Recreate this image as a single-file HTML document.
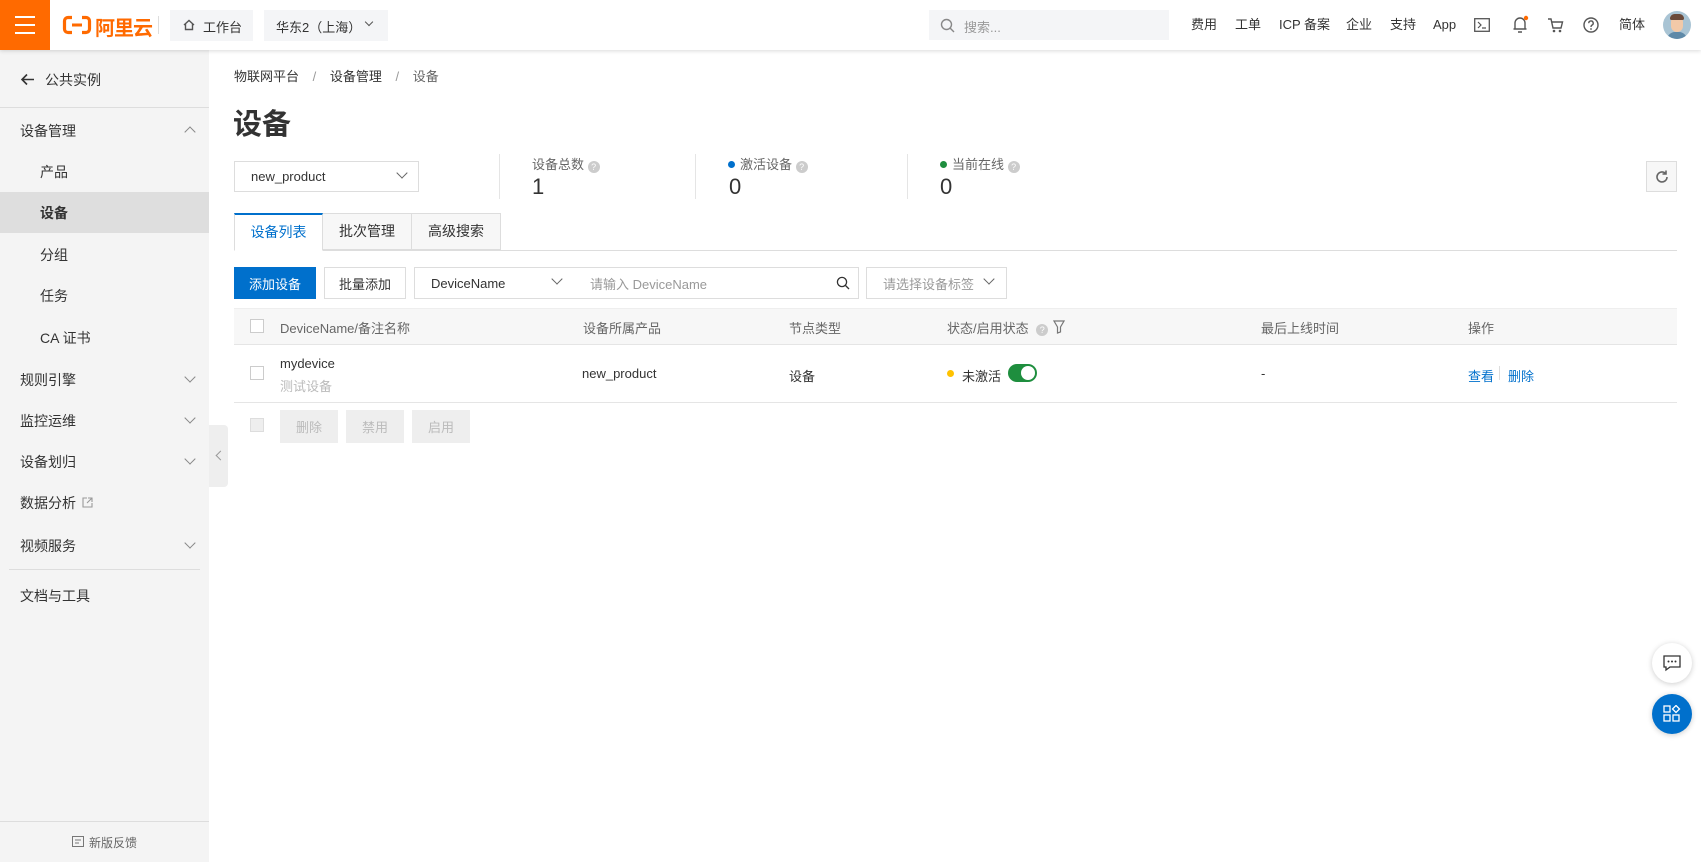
<!DOCTYPE html>
<html><head><meta charset="utf-8"><style>
*{margin:0;padding:0;box-sizing:border-box}
body{width:1701px;height:862px;overflow:hidden;background:#fff;font-family:"Liberation Sans","Noto Sans CJK SC",sans-serif;font-size:13px;color:#333;position:relative}
.a{position:absolute}
.hdr{left:0;top:0;width:1701px;height:50px;background:#fff;box-shadow:0 1px 4px rgba(0,0,0,.15);z-index:5}
.side{left:0;top:50px;width:209px;height:812px;background:#f4f4f4}
.si{position:absolute;left:20px;font-size:14px;color:#333}
.chev{position:absolute;left:186px;width:8px;height:8px;border-right:1.5px solid #888;border-bottom:1.5px solid #888}
.th{position:absolute;top:318px;font-size:13px;color:#666}
.btn{position:absolute;border:1px solid #ddd;background:#fff;font-size:13px;display:flex;align-items:center;justify-content:center}
.nav{position:absolute;top:16px;font-size:13px;line-height:18px;color:#333;white-space:nowrap}
</style></head><body>
<div class="a hdr">
 <div class="a" style="left:0;top:0;width:50px;height:50px;background:#ff6a00">
  <div class="a" style="left:15px;top:16px;width:20px;height:2px;background:#fff"></div>
  <div class="a" style="left:15px;top:24px;width:20px;height:2px;background:#fff"></div>
  <div class="a" style="left:15px;top:32px;width:20px;height:2px;background:#fff"></div>
 </div>
 <svg class="a" style="left:62px;top:15px" width="30" height="20" viewBox="0 0 30 20"><path d="M10 2.5H6a3.5 3.5 0 0 0-3.5 3.5v8A3.5 3.5 0 0 0 6 17.5h4M20 2.5h4A3.5 3.5 0 0 1 27.5 6v8a3.5 3.5 0 0 1-3.5 3.5h-4" fill="none" stroke="#ff6a00" stroke-width="3.2"/><rect x="10" y="8.5" width="10" height="3" fill="#ff6a00"/></svg>
 <div class="a" style="left:95px;top:12px;font-size:20px;font-weight:bold;color:#ff6a00;letter-spacing:-1px">阿里云</div>
 <div class="a" style="left:158px;top:16px;width:1px;height:18px;background:#ddd"></div>
 <div class="a" style="left:170px;top:10px;width:83px;height:31px;background:#f4f5f7;font-size:13px;color:#333;padding:7px 0 0 33px">工作台</div>
 <svg class="a" style="left:182px;top:18px" width="14" height="14" viewBox="0 0 14 14"><path d="M2 7L7 2.5 12 7M3.5 6v5.5h7V6" fill="none" stroke="#555" stroke-width="1.4"/></svg>
 <div class="a" style="left:264px;top:10px;width:124px;height:31px;background:#f4f5f7;font-size:13px;color:#333;padding:7px 0 0 12px">华东2（上海）</div>
 <div class="a" style="left:366px;top:19px;width:6px;height:6px;border-right:1.4px solid #555;border-bottom:1.4px solid #555;transform:rotate(45deg)"></div>
 <div class="a" style="left:929px;top:10px;width:240px;height:30px;background:#f4f5f7;color:#999;padding:7px 0 0 35px">搜索...</div>
 <svg class="a" style="left:940px;top:18px" width="15" height="15"><circle cx="6.5" cy="6.5" r="5" fill="none" stroke="#888" stroke-width="1.4"/><path d="M10 10l4 4" stroke="#888" stroke-width="1.4"/></svg>
 <div class="nav" style="left:1191px">费用</div>
 <div class="nav" style="left:1235px">工单</div>
 <div class="nav" style="left:1279px">ICP 备案</div>
 <div class="nav" style="left:1346px">企业</div>
 <div class="nav" style="left:1390px">支持</div>
 <div class="nav" style="left:1433px">App</div>
 <svg class="a" style="left:1474px;top:18px" width="16" height="14"><rect x=".7" y=".7" width="14.6" height="12.6" fill="none" stroke="#555" stroke-width="1.3"/><path d="M4 4l3 3-3 3M8 10h4" fill="none" stroke="#555" stroke-width="1.2"/></svg>
 <svg class="a" style="left:1511px;top:15px" width="18" height="19"><path d="M4 14V8a5 5 0 0 1 10 0v6zM2.5 14h13M7 17h4" fill="none" stroke="#555" stroke-width="1.4"/><circle cx="15" cy="3" r="2.2" fill="#ff6a00"/></svg>
 <svg class="a" style="left:1547px;top:17px" width="17" height="16"><path d="M1 2h3l2 9h8l1.5-6H5" fill="none" stroke="#555" stroke-width="1.4"/><circle cx="7" cy="14" r="1.3" fill="#555"/><circle cx="13" cy="14" r="1.3" fill="#555"/></svg>
 <svg class="a" style="left:1583px;top:17px" width="16" height="16"><circle cx="8" cy="8" r="7" fill="none" stroke="#555" stroke-width="1.4"/><path d="M5.8 6.2a2.2 2.2 0 1 1 3 2c-.8.4-.8.9-.8 1.8" fill="none" stroke="#555" stroke-width="1.4"/><circle cx="8" cy="12" r=".9" fill="#555"/></svg>
 <div class="nav" style="left:1619px">简体</div>
 <div class="a" style="left:1663px;top:11px;width:28px;height:28px;border-radius:50%;background:#a9c4d4;overflow:hidden">
  <div class="a" style="left:8px;top:5px;width:12px;height:16px;border-radius:6px;background:#f2c9a8"></div>
  <div class="a" style="left:7px;top:3px;width:14px;height:6px;border-radius:6px 6px 2px 2px;background:#6b4a3a"></div>
  <div class="a" style="left:4px;top:21px;width:20px;height:10px;border-radius:8px 8px 0 0;background:#5e89a8"></div>
 </div>
</div>

<div class="a side">
 <div class="si" style="top:20px;left:45px">公共实例</div>
 <svg class="a" style="left:20px;top:23px" width="15" height="13"><path d="M14 6.5H2M7 1.5l-5 5 5 5" fill="none" stroke="#333" stroke-width="1.6"/></svg>
 <div class="a" style="left:0;top:57px;width:209px;height:1px;background:#ddd"></div>
 <div class="si" style="top:71px">设备管理</div>
 <div class="chev" style="top:78px;transform:rotate(-135deg)"></div>
 <div class="si" style="top:112px;left:40px">产品</div>
 <div class="a" style="left:0;top:142px;width:209px;height:41px;background:#dedede"></div>
 <div class="si" style="top:153px;left:40px;font-weight:bold">设备</div>
 <div class="si" style="top:195px;left:40px">分组</div>
 <div class="si" style="top:236px;left:40px">任务</div>
 <div class="si" style="top:278px;left:40px">CA 证书</div>
 <div class="si" style="top:320px">规则引擎</div><div class="chev" style="top:323px;transform:rotate(45deg)"></div>
 <div class="si" style="top:361px">监控运维</div><div class="chev" style="top:364px;transform:rotate(45deg)"></div>
 <div class="si" style="top:402px">设备划归</div><div class="chev" style="top:405px;transform:rotate(45deg)"></div>
 <div class="si" style="top:443px">数据分析</div>
 <svg class="a" style="left:82px;top:447px" width="11" height="11"><path d="M5 1H1v9h9V6M6 1h4v4M10 1L5 6" fill="none" stroke="#999" stroke-width="1.1"/></svg>
 <div class="si" style="top:486px">视频服务</div><div class="chev" style="top:489px;transform:rotate(45deg)"></div>
 <div class="a" style="left:9px;top:519px;width:191px;height:1px;background:#ddd"></div>
 <div class="si" style="top:536px">文档与工具</div>
 <div class="a" style="left:0;top:771px;width:209px;height:1px;background:#ddd"></div>
 <div class="a" style="left:89px;top:784px;font-size:12px;color:#666">新版反馈</div>
 <svg class="a" style="left:72px;top:786px" width="12" height="11"><rect x=".5" y=".5" width="11" height="10" fill="none" stroke="#777"/><path d="M3 4h6M3 7h4" stroke="#777"/></svg>
</div>
<div class="a" style="left:209px;top:425px;width:19px;height:62px;background:#eee;border-radius:0 4px 4px 0"></div>
<div class="a" style="left:217px;top:452px;width:7px;height:7px;border-left:1.3px solid #999;border-bottom:1.3px solid #999;transform:rotate(45deg)"></div>

<div class="a" style="left:234px;top:66px;font-size:13px;color:#333">物联网平台 <span style="color:#999;margin:0 10px">/</span> 设备管理 <span style="color:#999;margin:0 10px">/</span> <span style="color:#666">设备</span></div>
<div class="a" style="left:233px;top:101px;font-size:29px;font-weight:bold;color:#333">设备</div>

<div class="btn" style="left:234px;top:161px;width:185px;height:31px;justify-content:flex-start;padding-left:16px">new_product</div>
<div class="a" style="left:398px;top:169px;width:8px;height:8px;border-right:1.4px solid #666;border-bottom:1.4px solid #666;transform:rotate(45deg)"></div>

<div class="a" style="left:499px;top:154px;width:1px;height:45px;background:#e5e5e5"></div>
<div class="a" style="left:695px;top:154px;width:1px;height:45px;background:#e5e5e5"></div>
<div class="a" style="left:907px;top:154px;width:1px;height:45px;background:#e5e5e5"></div>
<div class="a" style="left:532px;top:154px;color:#666">设备总数 <span style="display:inline-block;width:12px;height:12px;border-radius:50%;background:#ccc;color:#fff;font-size:9px;text-align:center;line-height:12px;vertical-align:-1px">?</span></div>
<div class="a" style="left:532px;top:174px;font-size:22px;color:#333">1</div>
<div class="a" style="left:728px;top:154px;color:#666"><span style="display:inline-block;width:7px;height:7px;border-radius:50%;background:#0070cc;margin-right:5px;vertical-align:1px"></span>激活设备 <span style="display:inline-block;width:12px;height:12px;border-radius:50%;background:#ccc;color:#fff;font-size:9px;text-align:center;line-height:12px;vertical-align:-1px">?</span></div>
<div class="a" style="left:729px;top:174px;font-size:22px;color:#333">0</div>
<div class="a" style="left:940px;top:154px;color:#666"><span style="display:inline-block;width:7px;height:7px;border-radius:50%;background:#1e8e3e;margin-right:5px;vertical-align:1px"></span>当前在线 <span style="display:inline-block;width:12px;height:12px;border-radius:50%;background:#ccc;color:#fff;font-size:9px;text-align:center;line-height:12px;vertical-align:-1px">?</span></div>
<div class="a" style="left:940px;top:174px;font-size:22px;color:#333">0</div>
<div class="btn" style="left:1646px;top:161px;width:31px;height:31px;background:#f7f7f7"><svg width="16" height="16"><path d="M13 8a5 5 0 1 1-1.6-3.7M12 1.5v3.5H8.5" fill="none" stroke="#666" stroke-width="1.6"/></svg></div>

<div class="a" style="left:234px;top:250px;width:1443px;height:1px;background:#ddd"></div>
<div class="a" style="left:234px;top:213px;width:89px;height:38px;border:1px solid #ddd;border-top:2px solid #0070cc;border-bottom:1px solid #fff;background:#fff;color:#0070cc;font-size:14px;text-align:center;line-height:34px">设备列表</div>
<div class="a" style="left:323px;top:213px;width:89px;height:37px;border:1px solid #ddd;border-left:0;background:#f7f7f7;font-size:14px;text-align:center;line-height:35px">批次管理</div>
<div class="a" style="left:412px;top:213px;width:89px;height:37px;border:1px solid #ddd;border-left:0;background:#f7f7f7;font-size:14px;text-align:center;line-height:35px">高级搜索</div>

<div class="btn" style="left:234px;top:267px;width:82px;height:32px;background:#0070cc;border-color:#0070cc;color:#fff">添加设备</div>
<div class="btn" style="left:324px;top:267px;width:82px;height:32px">批量添加</div>
<div class="btn" style="left:414px;top:267px;width:161px;height:32px;justify-content:flex-start;padding-left:16px">DeviceName</div>
<div class="a" style="left:553px;top:275px;width:8px;height:8px;border-right:1.4px solid #666;border-bottom:1.4px solid #666;transform:rotate(45deg)"></div>
<div class="btn" style="left:574px;top:267px;width:285px;height:32px;border-left:0;justify-content:flex-start;padding-left:16px;color:#999">请输入 DeviceName</div>
<svg class="a" style="left:836px;top:276px" width="14" height="14"><circle cx="6" cy="6" r="4.6" fill="none" stroke="#333" stroke-width="1.3"/><path d="M9.5 9.5l3.5 3.5" stroke="#333" stroke-width="1.3"/></svg>
<div class="btn" style="left:866px;top:267px;width:141px;height:32px;justify-content:flex-start;padding-left:16px;color:#999">请选择设备标签</div>
<div class="a" style="left:985px;top:275px;width:8px;height:8px;border-right:1.4px solid #666;border-bottom:1.4px solid #666;transform:rotate(45deg)"></div>

<div class="a" style="left:234px;top:308px;width:1443px;height:37px;background:#f7f7f7;border-top:1px solid #eee;border-bottom:1px solid #e5e5e5"></div>
<div class="a" style="left:250px;top:319px;width:14px;height:14px;border:1px solid #ccc;background:#fff"></div>
<div class="th" style="left:280px">DeviceName/备注名称</div>
<div class="th" style="left:583px">设备所属产品</div>
<div class="th" style="left:789px">节点类型</div>
<div class="th" style="left:947px">状态/启用状态 <span style="display:inline-block;width:12px;height:12px;border-radius:50%;background:#ccc;color:#fff;font-size:9px;text-align:center;line-height:12px;margin-left:4px">?</span></div>
<svg class="a" style="left:1053px;top:320px" width="12" height="14"><path d="M1 1h10L7.5 7v5L4.5 13V7z" fill="none" stroke="#777" stroke-width="1.2"/></svg>
<div class="th" style="left:1261px">最后上线时间</div>
<div class="th" style="left:1468px">操作</div>

<div class="a" style="left:250px;top:366px;width:14px;height:14px;border:1px solid #ccc;background:#fff"></div>
<div class="a" style="left:280px;top:356px;color:#333">mydevice</div>
<div class="a" style="left:280px;top:376px;color:#bbb">测试设备</div>
<div class="a" style="left:582px;top:366px">new_product</div>
<div class="a" style="left:789px;top:366px">设备</div>
<div class="a" style="left:947px;top:370px;width:7px;height:7px;border-radius:50%;background:#ffc200"></div>
<div class="a" style="left:962px;top:366px">未激活</div>
<div class="a" style="left:1008px;top:364px;width:29px;height:18px;border-radius:9px;background:#1e8e3e"><div class="a" style="left:13px;top:2px;width:14px;height:14px;border-radius:50%;background:#fff"></div></div>
<div class="a" style="left:1261px;top:366px">-</div>
<div class="a" style="left:1468px;top:366px;color:#0070cc">查看</div>
<div class="a" style="left:1499px;top:366px;width:1px;height:14px;background:#ddd"></div>
<div class="a" style="left:1508px;top:366px;color:#0070cc">删除</div>
<div class="a" style="left:234px;top:402px;width:1443px;height:1px;background:#e5e5e5"></div>

<div class="a" style="left:250px;top:418px;width:14px;height:14px;border:1px solid #ddd;background:#eee"></div>
<div class="btn" style="left:280px;top:410px;width:58px;height:33px;background:#eee;border-color:#eee;color:#bbb">删除</div>
<div class="btn" style="left:346px;top:410px;width:58px;height:33px;background:#eee;border-color:#eee;color:#bbb">禁用</div>
<div class="btn" style="left:412px;top:410px;width:58px;height:33px;background:#eee;border-color:#eee;color:#bbb">启用</div>

<div class="a" style="left:1652px;top:643px;width:40px;height:40px;border-radius:50%;background:#fff;box-shadow:0 1px 6px rgba(0,0,0,.2)"><svg class="a" style="left:11px;top:12px" width="18" height="17"><path d="M1 1h16v11H7l-4 3v-3H1z" fill="none" stroke="#333" stroke-width="1.3"/><circle cx="5.5" cy="6.5" r="1" fill="#333"/><circle cx="9" cy="6.5" r="1" fill="#333"/><circle cx="12.5" cy="6.5" r="1" fill="#333"/></svg></div>
<div class="a" style="left:1652px;top:694px;width:40px;height:40px;border-radius:50%;background:#0070cc;box-shadow:0 1px 6px rgba(0,0,0,.2)"><svg class="a" style="left:11px;top:11px" width="18" height="18"><rect x="1" y="1" width="6" height="6" fill="none" stroke="#fff" stroke-width="1.3"/><rect x="1" y="10" width="6" height="6" fill="none" stroke="#fff" stroke-width="1.3"/><rect x="10" y="10" width="6" height="6" fill="none" stroke="#fff" stroke-width="1.3"/><path d="M13 .5l3.5 3.5L13 7.5 9.5 4z" fill="none" stroke="#fff" stroke-width="1.3"/></svg></div>
</body></html>
